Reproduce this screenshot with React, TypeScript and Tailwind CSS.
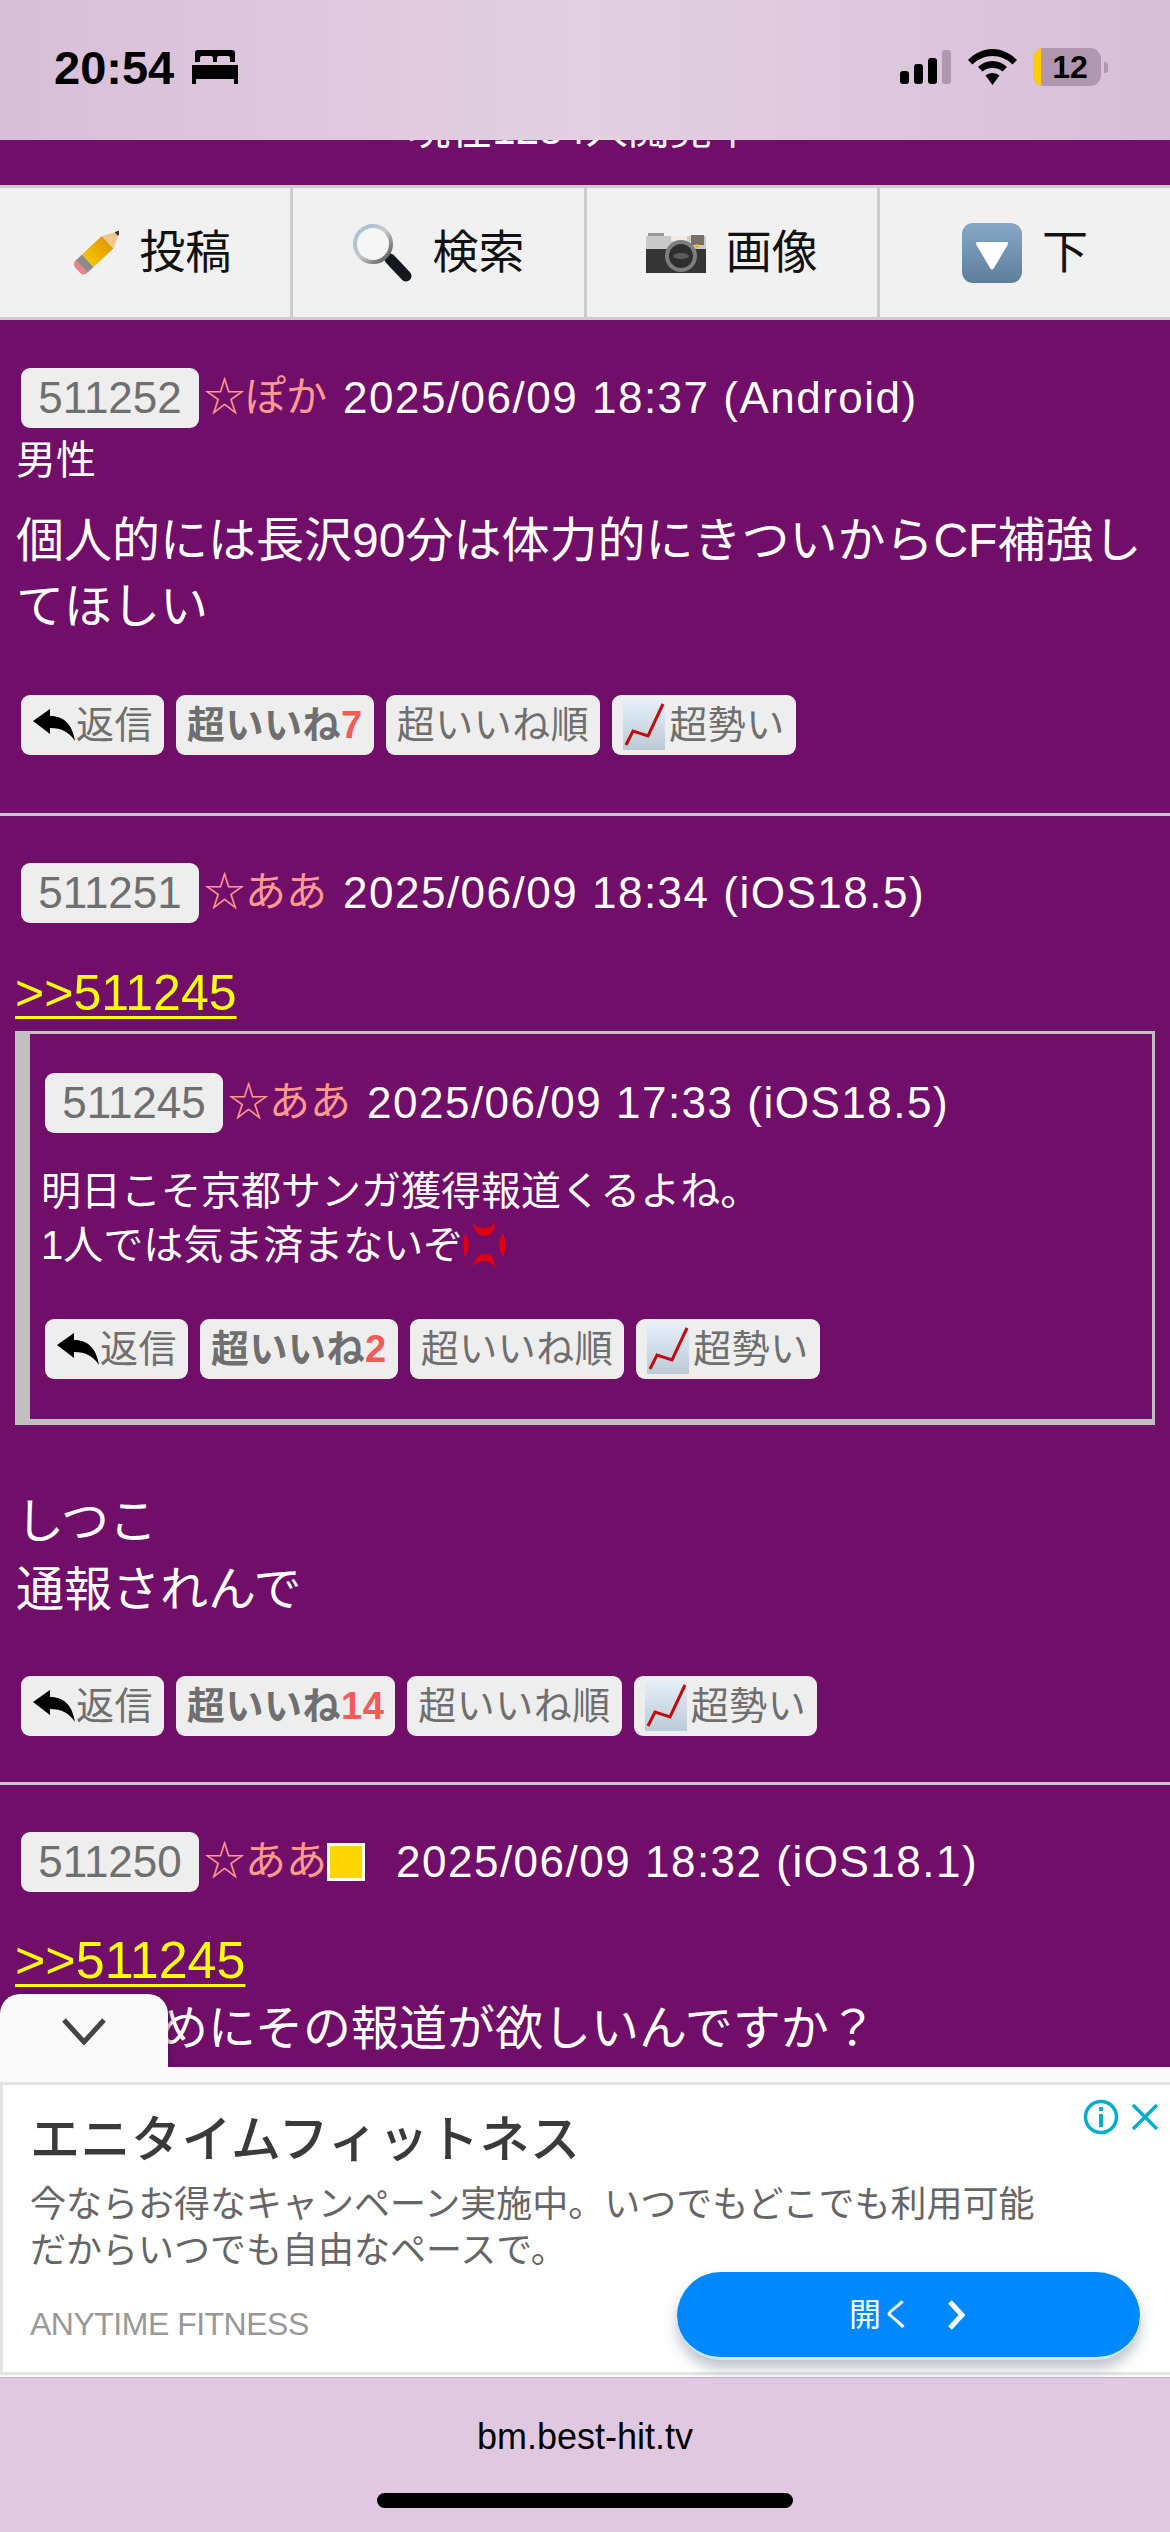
import type { ReactNode } from "react"

function PencilIcon() {
  return (
    <svg width="60" height="60" viewBox="0 0 60 60">
      <defs>
        <linearGradient id="pencilBody" x1="0" y1="0" x2="1" y2="0">
          <stop offset="0" stopColor="#f7c400" />
          <stop offset="1" stopColor="#e09a00" />
        </linearGradient>
      </defs>
      <g transform="rotate(-43 35 34)">
        <rect x="14" y="24" width="9" height="17" rx="5" fill="#e8858c" />
        <rect x="20" y="24" width="8" height="17" fill="#8b8b8b" />
        <rect x="28" y="24" width="27" height="17" fill="url(#pencilBody)" />
        <path d="M55 24 L72 32.5 L55 41 Z" fill="#ecc78f" />
        <path d="M67 30 L74 32.5 L67 35 Z" fill="#333" />
      </g>
    </svg>
  )
}

function LoupeIcon() {
  return (
    <svg width="60" height="60" viewBox="0 0 60 60">
      <defs>
        <linearGradient id="loupeRing" x1="0" y1="0" x2="1" y2="1">
          <stop offset="0" stopColor="#9fc0d8" />
          <stop offset="0.5" stopColor="#c9c9c9" />
          <stop offset="1" stopColor="#4a4a4a" />
        </linearGradient>
      </defs>
      <path d="M38 36 L54 53" stroke="#14181c" strokeWidth="11" strokeLinecap="round" />
      <circle cx="21" cy="21" r="18" fill="#f6f6f6" stroke="url(#loupeRing)" strokeWidth="4" />
    </svg>
  )
}

function CameraIcon() {
  return (
    <svg width="60" height="42" viewBox="0 0 60 42">
      <rect x="2" y="1" width="16" height="8" fill="#999" />
      <rect y="4" width="60" height="14" fill="#c9c9c9" />
      <rect x="25" y="4" width="16" height="5" fill="#f1ecd9" />
      <rect x="45" y="3" width="13" height="10" fill="#77706a" />
      <rect y="17" width="60" height="24" fill="#353535" />
      <circle cx="35" cy="24" r="16" fill="#7d7d7d" />
      <circle cx="35" cy="24" r="12" fill="#2e2e2e" />
      <ellipse cx="35" cy="24" rx="8" ry="3" fill="#5b5b5b" />
      <circle cx="51" cy="14" r="2" fill="#f5b800" />
    </svg>
  )
}

function DownButtonIcon() {
  return (
    <svg width="60" height="60" viewBox="0 0 60 60">
      <defs>
        <linearGradient id="downFill" x1="0" y1="0" x2="0" y2="1">
          <stop offset="0" stopColor="#86a8c6" />
          <stop offset="1" stopColor="#5e7e9c" />
        </linearGradient>
      </defs>
      <rect width="60" height="60" rx="11" fill="url(#downFill)" />
      <path d="M16 19 H44 Q47 19 45.500 22 L32 45 Q30 48 28 45 L14.500 22 Q13 19 16 19 Z" fill="#fff" />
    </svg>
  )
}

function ReplyIcon() {
  return (
    <svg width="44" height="34" viewBox="0 0 44 34">
      <path d="M1 13 L18 1 L18 8 C30 8 40 14 43 33 C37 24 30 20 18 20 L18 26 Z" fill="#000" />
    </svg>
  )
}

function ChartIcon() {
  return (
    <svg width="42" height="50" viewBox="0 0 42 50">
      <defs>
        <linearGradient id="chartFill" x1="0" y1="0" x2="0" y2="1">
          <stop offset="0" stopColor="#e4eef8" />
          <stop offset="1" stopColor="#bccbd8" />
        </linearGradient>
      </defs>
      <rect width="42" height="50" fill="url(#chartFill)" />
      <path d="M3 45 L10 31 L25 36 L40 4" fill="none" stroke="#c40a0a" strokeWidth="3" />
    </svg>
  )
}

function AngerIcon() {
  return (
    <svg width="44" height="48" viewBox="0 0 44 48">
      <g fill="#e00010">
        <path d="M10 2 C15 9 27 9 32 1 C32 10 28 15 22 15 C15 15 11 10 10 2 Z" />
        <path d="M10 46 C15 38 27 38 32 47 C32 37 28 33 22 33 C15 33 11 38 10 46 Z" />
        <path d="M2 12 C7 19 7 29 2 36 C0 28 0 20 2 12 Z" />
        <path d="M40 12 C35 19 35 29 40 36 C43 28 43 20 40 12 Z" />
      </g>
    </svg>
  )
}

function NavItem({ icon, label, last }: { icon: ReactNode; label: string; last?: boolean }) {
  return (
    <div className={`flex-1 flex items-center justify-center gap-[20px] text-[46px] text-[#111] ${last ? "" : "border-r-[3px] border-[#cccccc]"}`}>
      {icon}
      <span>{label}</span>
    </div>
  )
}

function Actions({ count }: { count: number }) {
  const btn = "h-[60px] px-[11px] flex items-center rounded-[9px] bg-[#eeeeee] text-[#6f6f6f] text-[38px] tracking-[0.5px] whitespace-nowrap"
  return (
    <div className="flex gap-[12px]">
      <div className={btn}>
        <ReplyIcon />
        <span>返信</span>
      </div>
      <div className={`${btn} font-bold`}>
        超いいね<span className="text-[#f55a5a]">{count}</span>
      </div>
      <div className={btn}>超いいね順</div>
      <div className={`${btn} gap-[4px]`}>
        <ChartIcon />
        <span>超勢い</span>
      </div>
    </div>
  )
}

function PostHeader({ no, name, date, square }: { no: string; name: string; date: string; square?: boolean }) {
  return (
    <div className="flex items-center h-[60px] whitespace-nowrap">
      <span className="w-[178px] h-[60px] flex items-center justify-center rounded-[9px] bg-[#eeeeee] text-[#6f6f6f] text-[44px] font-sans-num">{no}</span>
      <span className="ml-[5px] text-[41px] text-[#ff9a8e]">☆{name}</span>
      {square && <span className="w-[38px] h-[38px] bg-[#ffd700] border-[3px] border-white" />}
      <span className={`${square ? "ml-[31px]" : "ml-[16px]"} text-[44px] tracking-[1.5px] text-white`}>{date}</span>
    </div>
  )
}

function Divider() {
  return <div className="h-[3px] bg-[#c8c8c8]" />
}

function RefLink({ children, size }: { children: ReactNode; size: string }) {
  return <div className={`${size} text-[#ffff00] underline underline-offset-[6px] decoration-[3px] leading-[60px]`}>{children}</div>
}

export default function App() {
  return (
    <div className="w-[1170px] h-[2532px] flex flex-col overflow-hidden font-['Liberation_Sans','Noto_Sans_CJK_JP',sans-serif] bg-[#700e6a]">
      {/* status bar */}
      <div className="h-[140px] shrink-0 px-[54px] flex items-center justify-between bg-gradient-to-r from-[#d8bfd8] via-[#e3d0e2] to-[#d8bfd8] z-10">
        <div className="flex items-center gap-[18px] pb-[6px]">
          <span className="text-[47px] font-bold text-black leading-none">20:54</span>
          <svg width="46" height="34" viewBox="0 0 46 34">
            <path d="M6 0 H40 Q43 0 43 3 V12 H38 V8 Q38 6 36 6 H27 Q25 6 25 8 V12 H21 V8 Q21 6 19 6 H10 Q8 6 8 8 V12 H3 V3 Q3 0 6 0 Z M0 15 H46 V34 H42 V29 H4 V34 H0 Z" fill="#000" />
          </svg>
        </div>
        <div className="flex items-center pr-[8px] pb-[6px]">
          <svg width="51" height="34" viewBox="0 0 51 34" className="mr-[17px]">
            <rect x="0" y="21" width="9" height="13" rx="3" fill="#000" />
            <rect x="14" y="14" width="9" height="20" rx="3" fill="#000" />
            <rect x="28" y="8" width="9" height="26" rx="3" fill="#000" />
            <rect x="42" y="0" width="9" height="34" rx="3" fill="#b096ae" />
          </svg>
          <svg width="49" height="36" viewBox="0 0 49 36" className="mr-[16px]">
            <path d="M24.500 0 C34 0 42 4 49 11 L44.500 15.500 C39 10 32 7 24.500 7 C17 7 10 10 4.500 15.500 L0 11 C7 4 15 0 24.500 0 Z M24.500 12 C30 12 35 14 39 18 L34.500 22.500 C32 20 28.500 19 24.500 19 C20.500 19 17 20 14.500 22.500 L10 18 C14 14 19 12 24.500 12 Z M24.500 24 C27 24 29.500 25 31.500 26.500 L24.500 36 L17.500 26.500 C19.500 25 22 24 24.500 24 Z" fill="#000" />
          </svg>
          <div className="relative w-[68px] h-[38px] rounded-[11px] overflow-hidden bg-[#b096ae] flex items-center justify-center pl-[6px]">
            <span className="absolute left-0 top-0 bottom-0 w-[8px] bg-[#ffcc00]" />
            <span className="text-[32px] font-bold leading-none text-black">12</span>
          </div>
          <span className="ml-[3px] w-[4px] h-[11px] rounded-r-[3px] bg-[#b096ae]" />
        </div>
      </div>

      {/* page */}
      <div className="relative flex-1 min-h-0 overflow-hidden">
        <div className="h-[45px] overflow-hidden flex justify-center">
          <div className="-mt-[32px] pr-[8px] text-[42px] leading-[44px] text-white whitespace-nowrap">現在1234人閲覧中</div>
        </div>

        <div className="h-[135px] flex bg-[#f1f1f1] border-y-[3px] border-[#cccccc]">
          <NavItem icon={<PencilIcon />} label="投稿" />
          <NavItem icon={<LoupeIcon />} label="検索" />
          <NavItem icon={<CameraIcon />} label="画像" />
          <NavItem icon={<DownButtonIcon />} label="下" last />
        </div>

        {/* 511252 */}
        <div className="h-[493px] pt-[48px] pl-[21px]">
          <PostHeader no="511252" name="ぽか" date="2025/06/09 18:37 (Android)" />
          <div className="-ml-[5px] mt-[8px] text-[40px] leading-[48px] text-white">男性</div>
          <div className="-ml-[5px] mt-[24px] pr-[16px] text-[48px] leading-[66px] text-white">個人的には長沢90分は体力的にきついからCF補強してほしい</div>
          <div className="mt-[55px]">
            <Actions count={7} />
          </div>
        </div>
        <Divider />

        {/* 511251 */}
        <div className="h-[966px] pt-[47px]">
          <div className="pl-[21px]">
            <PostHeader no="511251" name="ああ" date="2025/06/09 18:34 (iOS18.5)" />
          </div>
          <div className="pl-[15px] mt-[40px]">
            <RefLink size="text-[50px]">&gt;&gt;511245</RefLink>
          </div>
          <div className="mx-[15px] mt-[8px] h-[394px] border-[#c0c0c0] border-t-[3px] border-l-[15px] border-r-[3px] border-b-[6px] pt-[39px] pl-[15px]">
            <PostHeader no="511245" name="ああ" date="2025/06/09 17:33 (iOS18.5)" />
            <div className="-ml-[4px] mt-[31px] text-[40px] leading-[54px] text-white">
              <div>明日こそ京都サンガ獲得報道くるよね。</div>
              <div className="flex items-center">
                1人では気ま済まないぞ
                <AngerIcon />
              </div>
            </div>
            <div className="mt-[47px]">
              <Actions count={2} />
            </div>
          </div>
          <div className="pl-[16px] mt-[63px] text-[48px] leading-[68px] text-white">
            <div>しつこ</div>
            <div>通報されんで</div>
          </div>
          <div className="pl-[21px] mt-[52px]">
            <Actions count={14} />
          </div>
        </div>
        <Divider />

        {/* 511250 */}
        <div className="pt-[47px]">
          <div className="pl-[21px]">
            <PostHeader no="511250" name="ああ" date="2025/06/09 18:32 (iOS18.1)" square />
          </div>
          <div className="pl-[15px] mt-[38px]">
            <RefLink size="text-[52px]">&gt;&gt;511245</RefLink>
          </div>
          <div className="pl-[16px] mt-[6px] text-[48px] leading-[66px] text-white whitespace-nowrap">何のためにその報道が欲しいんですか？</div>
        </div>

        {/* ad collapse tab */}
        <div className="absolute left-0 bottom-0 w-[168px] h-[73px] rounded-t-[20px] bg-[#fafafa] shadow-[2px_0_5px_rgba(60,20,60,0.5)] flex items-center justify-center">
          <svg width="46" height="28" viewBox="0 0 46 28">
            <path d="M3 3 L23 25 L43 3" fill="none" stroke="#444" strokeWidth="5" />
          </svg>
        </div>
      </div>

      {/* ad */}
      <div className="h-[310px] shrink-0 bg-[#fafafa] pt-[15px] z-10">
        <div className="relative h-[293px] bg-white border-l-[3px] border-t-[3px] border-b-[3px] border-[#e4e4e4] pl-[27px] pt-[25px]">
          <div className="text-[50px] leading-[60px] font-medium text-[#3a3a3a] tracking-[0.5px]">エニタイムフィットネス</div>
          <div className="mt-[12px] text-[36px] leading-[46px] text-[#666]">
            <div>今ならお得なキャンペーン実施中。いつでもどこでも利用可能</div>
            <div>だからいつでも自由なペースで。</div>
          </div>
          <div className="mt-[30px] text-[32px] leading-[40px] text-[#999] tracking-[-0.5px]">ANYTIME FITNESS</div>

          <div className="absolute left-[1080px] top-[14px] flex items-center gap-[12px]">
            <svg width="36" height="36" viewBox="0 0 36 36">
              <circle cx="18" cy="18" r="15.500" fill="none" stroke="#00aecd" strokeWidth="3.500" />
              <rect x="16" y="15" width="4" height="13" fill="#00aecd" />
              <rect x="16" y="8" width="4" height="4" fill="#00aecd" />
            </svg>
            <svg width="28" height="28" viewBox="0 0 28 28">
              <path d="M2 2 L26 26 M26 2 L2 26" stroke="#00aecd" strokeWidth="3.500" />
            </svg>
          </div>

          <div className="absolute left-[674px] top-[187px] w-[463px] h-[88px] rounded-[44px] bg-[#0088ff] border-b-[3px] border-b-white/80 shadow-[0_8px_14px_rgba(60,80,100,0.35)] flex items-center justify-center text-[32px] text-white">
            <span>開く</span>
            <svg width="22" height="34" viewBox="0 0 22 34" className="ml-[33px]">
              <path d="M4 4 L16 17 L4 30" fill="none" stroke="#fff" strokeWidth="5" />
            </svg>
          </div>
        </div>
      </div>

      {/* safari bottom bar */}
      <div className="h-[155px] shrink-0 flex flex-col items-center bg-[#e0c9e0] border-t border-[#c8b0c8] z-10">
        <div className="mt-[38px] text-[36px] leading-[42px] text-black font-medium">bm.best-hit.tv</div>
        <div className="mt-[35px] w-[416px] h-[15px] rounded-full bg-black" />
      </div>
    </div>
  )
}
